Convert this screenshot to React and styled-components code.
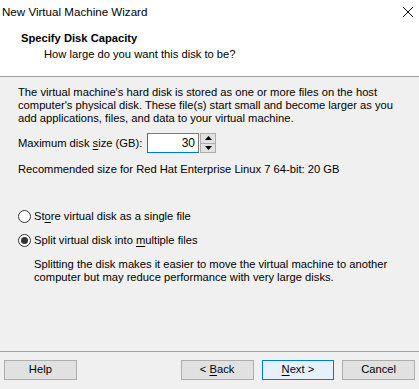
import React from 'react'
import styled, { createGlobalStyle } from 'styled-components'

const GlobalStyle = createGlobalStyle`
  html, body {
    margin: 0;
    padding: 0;
    background: #f0f0f0;
  }
  body {
    font-family: "Liberation Sans", Arial, sans-serif;
    font-size: 11.2px;
    color: #000;
  }
`

const Window = styled.div`
  width: 419px;
  height: 389px;
  display: flex;
  flex-direction: column;
  background: #f0f0f0;
  overflow: hidden;
  white-space: nowrap;
`

const TitleBar = styled.div`
  height: 23px;
  display: flex;
  align-items: center;
  justify-content: space-between;
  padding: 0 6px 0 2px;
  background: #fff;
  font-size: 11.6px;
`

const Header = styled.div`
  height: 53px;
  background: #fff;
  border-bottom: 1px solid #a0a0a0;
  padding-left: 21px;
  display: flex;
  flex-direction: column;
`

const HeaderTitle = styled.div`
  font-weight: 700;
  margin-top: 7px;
  line-height: 16px;
`

const HeaderSub = styled.div`
  margin-left: 23px;
  line-height: 16px;
`

const Body = styled.div`
  flex: 1;
  padding: 9px 18px 0;
  display: flex;
  flex-direction: column;
`

const Text = styled.p`
  margin: 0;
  line-height: 13px;
  margin-left: ${p => p.$indent || 0}px;
  margin-top: ${p => p.$top || 0}px;
`

const SizeRow = styled.div`
  display: flex;
  align-items: center;
  margin-top: 8px;
  height: 20px;
`

const SizeLabel = styled.span`
  width: 129px;
  flex-shrink: 0;
`

const Input = styled.div`
  width: 47px;
  height: 18px;
  flex-shrink: 0;
  border: 1px solid #0078d7;
  border-top-color: #7a7a7a;
  border-right-color: #7a7a7a;
  background: #fff;
  display: flex;
  align-items: center;
  justify-content: flex-end;
  padding-right: 3px;
  font-size: 12px;
`

const Spin = styled.div`
  margin-left: 1px;
  display: flex;
  flex-direction: column;
  height: 20px;
`

const SpinButton = styled.div`
  width: 14px;
  height: 9px;
  border: 1px solid #adadad;
  margin-top: ${p => (p.$down ? '-1px' : '0')};
  background: #e1e1e1;
  display: flex;
  align-items: center;
  justify-content: center;
`

const RadioRow = styled.label`
  display: flex;
  align-items: center;
  height: 16px;
  margin-top: ${p => p.$top}px;
`

const RadioCircle = styled.span`
  width: 11px;
  height: 11px;
  border: 1px solid #333;
  border-radius: 50%;
  background: #fff;
  display: flex;
  align-items: center;
  justify-content: center;
  margin-right: 3px;
  &::after {
    content: '';
    width: 7px;
    height: 7px;
    border-radius: 50%;
    background: ${p => (p.$checked ? '#333' : 'transparent')};
  }
`

const Footer = styled.div`
  border-top: 1px solid #a0a0a0;
  height: 29px;
  display: flex;
  align-items: flex-start;
  padding: 8px 4px 0;
`

const Button = styled.div`
  width: 71px;
  height: 18px;
  border: 1px solid ${p => (p.$primary ? '#0078d7' : '#adadad')};
  background: ${p => (p.$primary ? '#e5f1fb' : '#e1e1e1')};
  display: flex;
  align-items: center;
  justify-content: center;
  margin-left: ${p => p.$gap || 0}px;
  line-height: 1;
`

const U = styled.span`
  text-decoration: underline;
  text-underline-offset: 2px;
`

function Arrow({ up }) {
  return (
    <svg width="7" height="4" viewBox="0 0 7 4">
      <path d={up ? 'M0 4 L3.5 0 L7 4 Z' : 'M0 0 L3.5 4 L7 0 Z'} fill="#000" />
    </svg>
  )
}

export default function App() {
  return (
    <Window>
      <GlobalStyle />
      <TitleBar>
        <span>New Virtual Machine Wizard</span>
        <svg width="10" height="10" viewBox="0 0 10 10">
          <path d="M0 0 L10 10 M10 0 L0 10" stroke="#000" strokeWidth="1" />
        </svg>
      </TitleBar>
      <Header>
        <HeaderTitle>Specify Disk Capacity</HeaderTitle>
        <HeaderSub>How large do you want this disk to be?</HeaderSub>
      </Header>
      <Body>
        <Text>
          The virtual machine's hard disk is stored as one or more files on the host
          <br />
          computer's physical disk. These file(s) start small and become larger as you
          <br />
          add applications, files, and data to your virtual machine.
        </Text>
        <SizeRow>
          <SizeLabel>
            Maximum disk <U>s</U>ize (GB):
          </SizeLabel>
          <Input>30</Input>
          <Spin>
            <SpinButton>
              <Arrow up />
            </SpinButton>
            <SpinButton $down>
              <Arrow />
            </SpinButton>
          </Spin>
        </SizeRow>
        <Text $top={10}>Recommended size for Red Hat Enterprise Linux 7 64-bit: 20 GB</Text>
        <RadioRow $top={32}>
          <RadioCircle />
          <span>
            St<U>o</U>re virtual disk as a single file
          </span>
        </RadioRow>
        <RadioRow $top={8}>
          <RadioCircle $checked />
          <span>
            Split virtual disk into <U>m</U>ultiple files
          </span>
        </RadioRow>
        <Text $indent={16} $top={10}>
          Splitting the disk makes it easier to move the virtual machine to another
          <br />
          computer but may reduce performance with very large disks.
        </Text>
      </Body>
      <Footer>
        <Button>Help</Button>
        <Button $gap={104}>
          <span>
            &lt; <U>B</U>ack
          </span>
        </Button>
        <Button $gap={8} $primary>
          <span>
            <U>N</U>ext &gt;
          </span>
        </Button>
        <Button $gap={8}>Cancel</Button>
      </Footer>
    </Window>
  )
}
